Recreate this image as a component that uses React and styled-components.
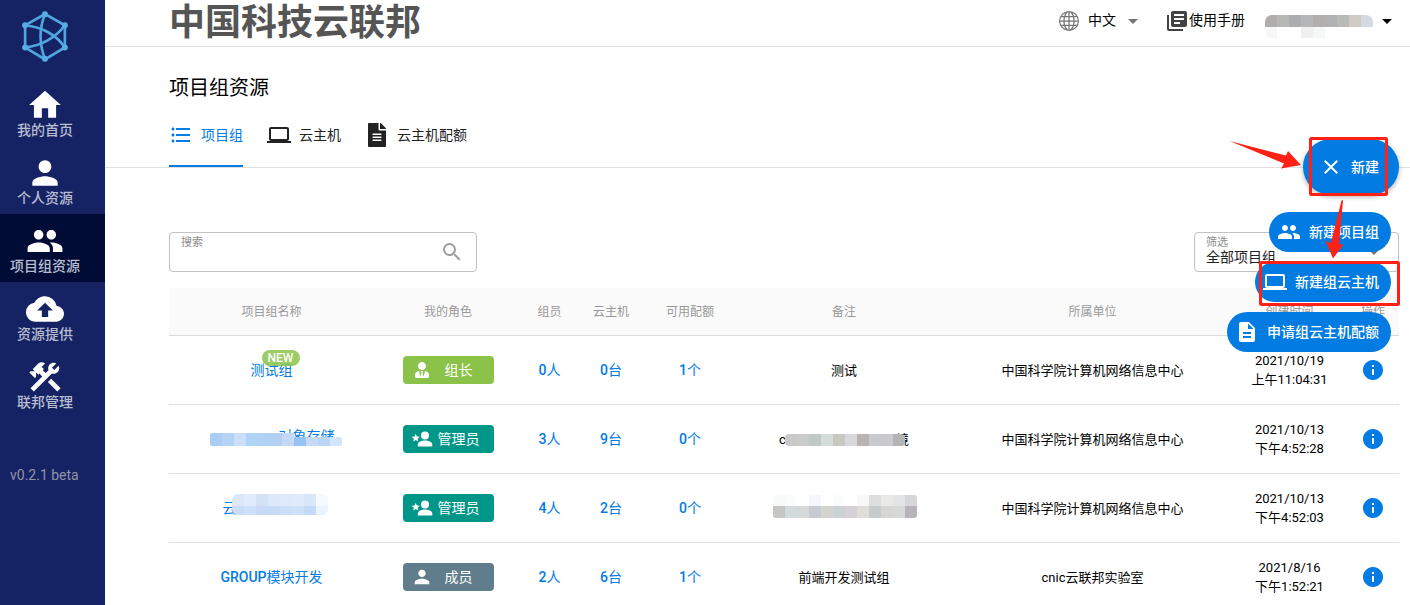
import { useState } from "react";
import styled, { createGlobalStyle, css } from "styled-components";
import {
  MdArrowDropDown,
  MdClose,
  MdCloudUpload,
  MdConstruction,
  MdDescription,
  MdFormatListBulleted,
  MdGroup,
  MdHome,
  MdInfo,
  MdLaptop,
  MdLibraryBooks,
  MdPerson,
  MdSearch,
} from "react-icons/md";
import { FaFileAlt, FaUserTie } from "react-icons/fa";
import { BsGlobe } from "react-icons/bs";

const menus = [
  { label: "我的首页", Icon: MdHome },
  { label: "个人资源", Icon: MdPerson },
  { label: "项目组资源", Icon: MdGroup, active: true },
  { label: "资源提供", Icon: MdCloudUpload },
  { label: "联邦管理", Icon: MdConstruction },
];

const tabs = [
  { label: "项目组", Icon: MdFormatListBulleted },
  { label: "云主机", Icon: MdLaptop },
  { label: "云主机配额", Icon: FaFileAlt },
];

const actions = [
  { label: "新建项目组", Icon: MdGroup },
  { label: "新建组云主机", Icon: MdLaptop },
  { label: "申请组云主机配额", Icon: MdDescription },
];

const columns = [
  { label: "项目组名称", width: 205 },
  { label: "我的角色", width: 148 },
  { label: "组员", width: 55 },
  { label: "云主机", width: 68 },
  { label: "可用配额", width: 90 },
  { label: "备注", width: 218 },
  { label: "所属单位" },
  { label: "创建时间", width: 115 },
  { label: "操作", width: 52 },
];

const roles = {
  owner: { label: "组长", color: "#8bc34a", icon: <FaUserTie size={16} /> },
  leader: { label: "管理员", color: "#009688", icon: <PersonStar /> },
  member: { label: "成员", color: "#607d8b", icon: <MdPerson size={22} /> },
};

const masks = {
  user: {
    x: 0,
    y: 0,
    radius: 7,
    rows: [
      { h: 12, colors: ["#b0aeac", "#b7b7b5", "#abadb0", "#b5b6b8", "#b3afaf", "#b1b0b2", "#b8bab8", "#cfcac4", "#d4d9e2"] },
      { h: 11, colors: ["#f7f7f7", "", "", "#f0f0f1", "#f6f7f7"] },
    ],
  },
  storage: {
    x: 1,
    y: 6,
    radius: 2,
    rows: [
      { h: 4, colors: ["#a9cdf3", "#b4d4f5", "#cbe0f8", "#b1d3f5", "#b0d2f4", "#b4d1f2", "#c3d9f6"] },
      { h: 9, colors: ["#a9cdf3", "#b4d4f5", "#cbe0f8", "#b1d3f5", "#b0d2f4", "#b4d1f2", "#c3d9f6", "#96c3f2", "#c5daf7", "#bdd5f4", "#d1e6fa"] },
    ],
  },
  cloud: {
    x: 9,
    y: -5,
    radius: 6,
    rows: [
      { h: 12, colors: ["#dbe8f9", "#dfecfb", "#d4e2f6", "#dce9fa", "#dceafa", "#dfebfa", "#d7e6f9", "#f5faff"] },
      { h: 9, colors: ["#cbddf6", "#cde2f8", "#cad9f5", "#c5dbf6", "#cbe0f8", "#cfe1f8", "#c4daf6", "#e8f3fd"] },
    ],
  },
  remark: {
    x: 6,
    y: 4,
    radius: 4,
    rows: [
      { h: 12, colors: ["#c9c9cb", "#c9cccb", "#c1cac6", "#d5dddb", "#c8c8c2", "#d8d8dc", "#b9b4b1", "#c9cad0", "#c9c9cb", "#b4b5b2"] },
    ],
  },
  remarkLong: {
    x: 1,
    y: -1,
    radius: 3,
    rows: [
      { h: 11, colors: ["#f7faf9", "#fafcfc", "", "#f5f7fa", "", "#fafcfb", "", "#f9f7f9", "#dededf", "#e9e9e7", "#e2e4e5", "#d6d6d8"] },
      { h: 12, colors: ["#c6c6c5", "#d3dada", "#d6d9d9", "#c7cad1", "#d2d4cd", "#cad3d2", "#d5d2d7", "#e0dcd8", "#c8cbcc", "#d8d6d3", "#d6d9d7", "#b8b4b9"] },
    ],
  },
};

const groups = [
  {
    name: "测试组",
    isNew: true,
    role: "owner",
    counts: [0, 0, 1],
    remark: "测试",
    org: "中国科学院计算机网络信息中心",
    date: "2021/10/19",
    time: "上午11:04:31",
  },
  {
    name: <Masked width={126} mask={masks.storage} end="对象存储" />,
    role: "leader",
    counts: [3, 9, 0],
    remark: <Masked width={130} mask={masks.remark} start="c" end="境" />,
    org: "中国科学院计算机网络信息中心",
    date: "2021/10/13",
    time: "下午4:52:28",
  },
  {
    name: <Masked width={98} mask={masks.cloud} start="云" />,
    role: "leader",
    counts: [4, 2, 0],
    remark: <Masked width={144} mask={masks.remarkLong} />,
    org: "中国科学院计算机网络信息中心",
    date: "2021/10/13",
    time: "下午4:52:03",
  },
  {
    prefix: "GROUP",
    name: "模块开发",
    role: "member",
    counts: [2, 6, 1],
    remark: "前端开发测试组",
    org: "cnic云联邦实验室",
    date: "2021/8/16",
    time: "下午1:52:21",
  },
];

const units = ["人", "台", "个"];

export default function App() {
  const [keyword, setKeyword] = useState("");

  return (
    <>
      <GlobalStyle />
      <Shell>
        <Sidebar>
          <Logo />
          <nav>
            {menus.map(({ label, Icon, active }) => (
              <MenuItem key={label} href="#" $active={active}>
                <Icon size={38} />
                <MenuLabel>{label}</MenuLabel>
              </MenuItem>
            ))}
          </nav>
          <Version>v0.2.1 beta</Version>
        </Sidebar>

        <Main>
          <TopBar>
            <Brand>中国科技云联邦</Brand>
            <TopTools>
              <LangButton type="button">
                <BsGlobe size={20} color="#757575" />
                <Label>中文</Label>
                <MdArrowDropDown size={24} color="#757575" />
              </LangButton>
              <ManualLink href="#">
                <MdLibraryBooks size={24} color="#424242" />
                <Label>使用手册</Label>
              </ManualLink>
              <UserButton type="button" aria-label="用户">
                <UserName>
                  <Mosaic {...masks.user} />
                </UserName>
                <MdArrowDropDown size={24} />
              </UserButton>
            </TopTools>
          </TopBar>

          <PageHead>
            <PageTitle>项目组资源</PageTitle>
            <TabList>
              {tabs.map(({ label, Icon }, i) => (
                <Tab key={label} href="#" $active={i === 0}>
                  <Icon size={24} />
                  <Label>{label}</Label>
                </Tab>
              ))}
            </TabList>
          </PageHead>

          <Content>
            <Toolbar>
              <SearchField>
                <FieldLabel htmlFor="search">搜索</FieldLabel>
                <SearchInput
                  id="search"
                  value={keyword}
                  onChange={(e) => setKeyword(e.target.value)}
                />
                <MdSearch size={24} color="#9e9e9e" />
              </SearchField>
              <FilterField>
                <FieldLabel htmlFor="filter">筛选</FieldLabel>
                <FilterSelect id="filter">
                  <option>全部项目组</option>
                </FilterSelect>
                <MdArrowDropDown size={24} color="#757575" />
              </FilterField>
            </Toolbar>

            <Table>
              <thead>
                <tr>
                  {columns.map(({ label, width }) => (
                    <HeadCell key={label} $width={width}>
                      {label}
                    </HeadCell>
                  ))}
                </tr>
              </thead>
              <tbody>
                {groups.map((group, i) => (
                  <GroupRow key={i} group={group} />
                ))}
              </tbody>
            </Table>
          </Content>
        </Main>

        <SpeedDial>
          <Fab type="button">
            <MdClose size={24} />
            <Label>新建</Label>
          </Fab>
          <FabActions>
            {actions.map(({ label, Icon }) => (
              <FabAction key={label} type="button">
                <Icon size={24} />
                <Label>{label}</Label>
              </FabAction>
            ))}
          </FabActions>
        </SpeedDial>
        <Guide />
      </Shell>
    </>
  );
}

function GroupRow({ group }) {
  const role = roles[group.role];
  return (
    <tr>
      <Cell>
        <TextLink href="#">
          {group.prefix && <Latin>{group.prefix}</Latin>}
          {group.name}
          {group.isNew && <NewBadge>NEW</NewBadge>}
        </TextLink>
      </Cell>
      <Cell>
        <RoleTag $color={role.color}>
          <RoleIcon>{role.icon}</RoleIcon>
          <RoleName>{role.label}</RoleName>
        </RoleTag>
      </Cell>
      {group.counts.map((count, i) => (
        <Cell key={units[i]}>
          <TextLink href="#">
            <Latin>{count}</Latin>
            {units[i]}
          </TextLink>
        </Cell>
      ))}
      <Cell>{group.remark}</Cell>
      <Cell>{group.org}</Cell>
      <Cell>
        {group.date}
        <br />
        {group.time}
      </Cell>
      <Cell>
        <InfoButton type="button" aria-label="详情">
          <MdInfo size={24} />
        </InfoButton>
      </Cell>
    </tr>
  );
}

function Masked({ mask, start, end, width }) {
  return (
    <MaskedText $width={width}>
      <span>{start}</span>
      <span>{end}</span>
      <Mosaic {...mask} />
    </MaskedText>
  );
}

function Mosaic({ x, y, radius, rows }) {
  const cell = 12;
  const width = Math.max(...rows.map((row) => row.colors.length)) * cell;
  const height = rows.reduce((sum, row) => sum + row.h, 0);
  return (
    <MosaicSvg $x={x} $y={y} $radius={radius} width={width} height={height} aria-hidden="true">
      {rows.map((row, r) =>
        row.colors.map(
          (color, c) =>
            color && (
              <rect
                key={`${r}-${c}`}
                x={c * cell}
                y={r === 0 ? 0 : rows[0].h}
                width={cell}
                height={row.h}
                fill={color}
                shapeRendering="crispEdges"
              />
            )
        )
      )}
    </MosaicSvg>
  );
}

function PersonStar() {
  return (
    <svg width="22" height="18" viewBox="0 0 22 18" fill="currentColor">
      <circle cx="14" cy="5.4" r="4" />
      <path d="M6.8 16.6v-2c0-2.7 4.4-4.1 7.2-4.1s7.3 1.4 7.3 4.1v2z" />
      <path d="M4.7 3.8l1.2 2.7 2.9.3-2.2 1.9.7 2.9-2.6-1.5-2.5 1.5.6-2.9L.6 6.8l2.9-.3z" />
    </svg>
  );
}

function Logo() {
  return (
    <LogoSvg viewBox="66 34 138 154" fill="none" stroke="#4fa5dd" strokeWidth="8">
      <path d="M135 43L195 77V144L135 180L75 144V77Z" />
      <path d="M135 43C118 85 118 135 135 180" />
      <path d="M75 77C125 82 170 106 195 144" />
      <path d="M195 77C170 112 125 139 75 144" />
      <g fill="#56aee3" stroke="none">
        <circle cx="135" cy="44" r="9" />
        <circle cx="195" cy="77" r="9" />
        <circle cx="195" cy="144" r="9" />
        <circle cx="135" cy="178" r="9" />
        <circle cx="75" cy="144" r="9" />
        <circle cx="75" cy="77" r="9" />
      </g>
    </LogoSvg>
  );
}

// red frames and arrows that lead through "新建" to "新建组云主机"
function Guide() {
  return (
    <GuideSvg viewBox="0 0 200 240" width="200" height="240" aria-hidden="true">
      <g fill="none" stroke="#ff2116" strokeWidth="3">
        <rect x="100.5" y="13.5" width="76" height="56" rx="1" />
        <rect x="50.5" y="137.5" width="138" height="42" rx="1" />
      </g>
      <g fill="#ff2116">
        <path d="M19.5 16L76 30.5L78 26L91 40L71 43.5L74 38.5Z" />
        <path d="M131.5 75.5Q132.5 74.5 133 76L129 119L133.5 119.5L123 133.5L115.5 116L121 118Z" />
      </g>
    </GuideSvg>
  );
}

const GlobalStyle = createGlobalStyle`
  * {
    box-sizing: border-box;
  }

  body {
    margin: 0;
    overflow: hidden;
    background: #fff;
    color: #000;
    font-family: Roboto, "Noto Sans CJK SC", sans-serif;
    font-size: 14px;
  }

  button, input, select {
    font: inherit;
  }

  a {
    color: inherit;
    text-decoration: none;
  }

  svg {
    flex-shrink: 0;
  }
`;

const Shell = styled.div`
  position: relative;
  display: flex;
  height: 100vh;
  overflow: hidden;
`;

const Sidebar = styled.aside`
  flex: 0 0 105px;
  background: #152364;
  color: #fff;
`;

const LogoSvg = styled.svg`
  display: block;
  width: 46px;
  height: 51px;
  margin: 11px 22px 16px;
`;

const MenuItem = styled.a`
  display: flex;
  flex-direction: column;
  align-items: center;
  height: 68px;
  padding: 8px 15px 0 0;
  background: ${({ $active }) => ($active ? "#000c36" : "transparent")};
`;

const MenuLabel = styled.span`
  color: #b9bdd0;
  font-weight: 500;
  line-height: 12px;
`;

const Version = styled.div`
  margin-top: 48px;
  padding-left: 10px;
  color: #9295a5;
  line-height: 18px;
`;

const Main = styled.main`
  flex: 1;
  min-width: 0;
`;

const TopBar = styled.header`
  display: flex;
  justify-content: space-between;
  height: 47px;
  padding: 0 11px 0 64px;
  border-bottom: 1px solid #e0e0e0;
`;

const Brand = styled.div`
  color: #555;
  font-size: 36px;
  font-weight: 700;
  line-height: 46px;
`;

const TopTools = styled.div`
  display: flex;
  align-items: center;
  height: 41px;
`;

// text beside an icon, raised so that the CJK glyphs sit on the icon's centre
const Label = styled.span`
  padding-bottom: 3px;
`;

const plainButton = css`
  display: flex;
  align-items: center;
  padding: 0;
  border: 0;
  background: none;
  color: inherit;
  cursor: pointer;
`;

const LangButton = styled.button`
  ${plainButton}
  margin-right: 20px;

  & svg:first-child {
    margin-right: 9px;
  }

  & svg:last-child {
    margin-left: 5px;
  }
`;

const ManualLink = styled.a`
  display: flex;
  align-items: center;
  margin-right: 20px;
`;

const UserButton = styled.button`
  ${plainButton}
`;

const UserName = styled.span`
  position: relative;
  width: 110px;
  height: 12px;
`;

const PageHead = styled.section`
  padding: 26px 64px 0;
  border-bottom: 1px solid #e0e0e0;
`;

const PageTitle = styled.h1`
  margin: 0 0 16px;
  font-size: 20px;
  font-weight: 400;
  line-height: 30px;
`;

const TabList = styled.nav`
  display: flex;
  gap: 24px;
`;

const Tab = styled.a`
  display: flex;
  align-items: center;
  gap: 8px;
  height: 48px;
  padding-bottom: 14px;
  border-bottom: 2px solid ${({ $active }) => ($active ? "#027be3" : "transparent")};
  color: ${({ $active }) => ($active ? "#027be3" : "#222")};
`;

const Content = styled.section`
  padding: 64px 11px 0 64px;
`;

const Toolbar = styled.div`
  display: flex;
  justify-content: space-between;
  margin-bottom: 16px;
`;

const Field = styled.div`
  position: relative;
  display: flex;
  align-items: center;
  height: 40px;
  border: 1px solid #c2c2c2;
  border-radius: 4px;

  & > svg {
    position: absolute;
    right: 12px;
    pointer-events: none;
  }
`;

const SearchField = styled(Field)`
  width: 308px;
`;

const FilterField = styled(Field)`
  width: 205px;
`;

const FieldLabel = styled.label`
  position: absolute;
  top: 2px;
  left: 11px;
  color: #8c8c8c;
  font-size: 11px;
  line-height: 16px;
`;

const control = css`
  width: 100%;
  height: 100%;
  padding: 10px 40px 0 11px;
  border: 0;
  outline: 0;
  background: transparent;
  color: #222;
`;

const SearchInput = styled.input`
  ${control}
`;

const FilterSelect = styled.select`
  ${control}
  appearance: none;
`;

const Table = styled.table`
  width: 100%;
  table-layout: fixed;
  border-collapse: separate;
  border-spacing: 0;
`;

const HeadCell = styled.th`
  width: ${({ $width }) => ($width ? `${$width}px` : "auto")};
  height: 48px;
  padding: 0 0 2px;
  border-bottom: 1px solid #dcdcdc;
  background: #fafafa;
  color: #999;
  font-size: 12px;
  font-weight: 400;
`;

const Cell = styled.td`
  height: 69px;
  padding: 0;
  border-bottom: 1px solid #e0e0e0;
  font-size: 13px;
  line-height: 19px;
  text-align: center;
`;

const TextLink = styled.a`
  position: relative;
  color: #027be3;
  font-size: 14px;
`;

const Latin = styled.span`
  font-weight: 500;
`;

const NewBadge = styled.span`
  position: absolute;
  top: -12px;
  right: -7px;
  width: 38px;
  border-radius: 8px;
  background: rgba(139, 195, 74, 0.85);
  color: #fff;
  font-size: 12px;
  font-weight: 500;
  line-height: 16px;
`;

const RoleTag = styled.span`
  display: flex;
  align-items: center;
  width: 91px;
  height: 28px;
  margin: 0 auto;
  padding: 0 10px 0 7px;
  border-radius: 4px;
  background: ${({ $color }) => $color};
  color: #fff;
  font-size: 14px;
`;

const RoleIcon = styled.span`
  display: flex;
  justify-content: center;
  width: 24px;
`;

const RoleName = styled.span`
  flex: 1;
`;

const InfoButton = styled.button`
  ${plainButton}
  margin: 0 auto;
  color: #027be3;
`;

const MaskedText = styled.span`
  position: relative;
  display: inline-flex;
  justify-content: space-between;
  width: ${({ $width }) => $width}px;
  height: 19px;
`;

const MosaicSvg = styled.svg`
  position: absolute;
  top: ${({ $y }) => $y}px;
  left: ${({ $x }) => $x}px;
  border-radius: ${({ $radius }) => $radius}px;
`;

const SpeedDial = styled.div`
  position: absolute;
  top: 139px;
  right: 11px;
`;

const fab = css`
  display: flex;
  align-items: center;
  gap: 8px;
  border: 0;
  background: #027be3;
  color: #fff;
  font-weight: 500;
  white-space: nowrap;
  cursor: pointer;
`;

const Fab = styled.button`
  ${fab}
  height: 56px;
  padding: 0 20px 0 16px;
  border-radius: 28px;
  box-shadow: 0 2px 5px rgba(0, 0, 0, 0.3);
`;

const FabActions = styled.div`
  position: absolute;
  top: 73px;
  right: 8px;
  display: flex;
  flex-direction: column;
  align-items: flex-end;
  gap: 10px;
`;

const FabAction = styled.button`
  ${fab}
  height: 40px;
  padding: 0 12px 0 8px;
  border-radius: 20px;
`;

const GuideSvg = styled.svg`
  position: absolute;
  top: 125px;
  right: 0;
  pointer-events: none;
`;
